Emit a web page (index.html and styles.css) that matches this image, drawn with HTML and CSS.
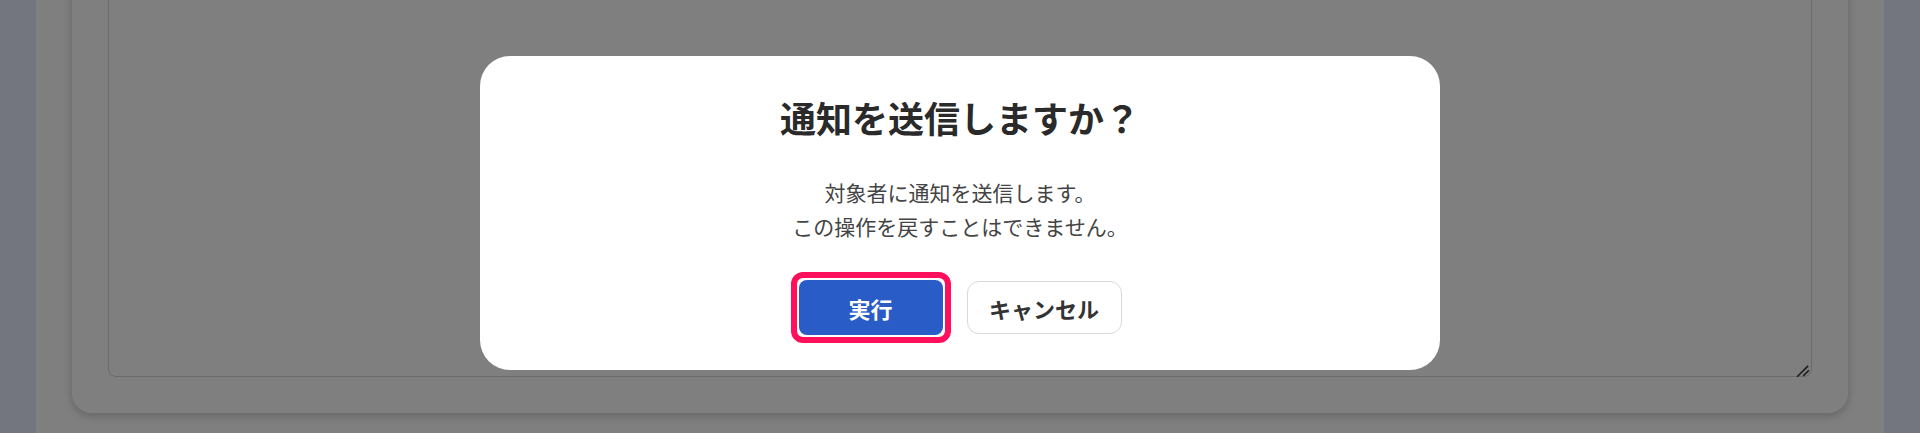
FILE: index.html
```html
<!DOCTYPE html>
<html lang="ja">
<head>
<meta charset="utf-8">
<title>通知を送信</title>
<link rel="stylesheet" href="styles.css">
</head>
<body>
<div class="page">
  <main class="main">
    <section class="card">
      <div class="field-wrap">
        <textarea class="field" aria-label="本文"></textarea>
        <svg class="grip" width="16" height="16" viewBox="0 0 16 16" aria-hidden="true">
          <path d="M1.6 15.2 L11.6 5.4 M7.8 14.4 L12.4 9.8" stroke="#3a3a3a" stroke-width="1.6" stroke-linecap="square" fill="none"/>
        </svg>
      </div>
    </section>
  </main>
</div>
<div class="overlay">
  <div class="modal" role="dialog" aria-modal="true">
    <h2 class="modal-title">通知を送信しますか？</h2>
    <p class="modal-text">対象者に通知を送信します。<br>この操作を戻すことはできません。</p>
    <div class="actions">
      <span class="focus-ring"><button class="btn btn-primary">実行</button></span>
      <button class="btn btn-secondary">キャンセル</button>
    </div>
  </div>
</div>
</body>
</html>
```
FILE: styles.css
```css
* { box-sizing: border-box; }
html, body { margin: 0; height: 100%; overflow: hidden; }
body {
  background: #e6ecfc;
  font-family: "Noto Sans CJK JP", "Noto Sans", sans-serif;
}
.page {
  padding: 0 36px;
  height: 100%;
}
.main {
  display: flow-root;
  background: #ffffff;
  height: 100%;
  padding: 0 36px;
}
.card {
  margin-top: -200px;
  background: #ffffff;
  border-radius: 20px;
  box-shadow: 0 3px 10px rgba(0, 0, 0, 0.22);
  padding: 36px;
}
.field-wrap {
  position: relative;
}
.field {
  display: block;
  width: 100%;
  height: 541px;
  border: 1px solid #d6d6d6;
  border-radius: 8px;
  background: #ffffff;
  resize: none;
}
.grip {
  position: absolute;
  right: 0;
  bottom: 0;
}
.overlay {
  position: fixed;
  inset: 0;
  background: rgba(0, 0, 0, 0.5);
  display: flex;
  justify-content: center;
  align-items: flex-start;
  padding-top: 56px;
}
.modal {
  width: 960px;
  background: #ffffff;
  border-radius: 30px;
  padding: 37px 40px 35px;
  display: flex;
  flex-direction: column;
  align-items: center;
  text-align: center;
}
.modal-title {
  margin: 0;
  font-size: 36px;
  line-height: 48px;
  font-weight: 700;
  color: #2a2a2a;
}
.modal-text {
  margin: 35px 0 0;
  font-size: 21px;
  line-height: 33.6px;
  color: #444444;
}
.actions {
  margin-top: 37px;
  display: flex;
  align-items: center;
  gap: 24px;
}
.focus-ring {
  display: flex;
  margin: -8px;
  padding: 2px;
  border: 6px solid #ff0f5c;
  border-radius: 12px;
  background: #ffffff;
}
.btn {
  font-family: inherit;
  font-size: 22px;
  font-weight: 700;
  cursor: pointer;
}
.btn-primary {
  width: 144px;
  height: 55px;
  background: #2a5cc7;
  color: #ffffff;
  border: none;
  border-radius: 8px;
}
.btn-secondary {
  width: 155px;
  height: 53px;
  background: #ffffff;
  color: #333333;
  border: 1px solid #d9d9d9;
  border-radius: 12px;
}
```
